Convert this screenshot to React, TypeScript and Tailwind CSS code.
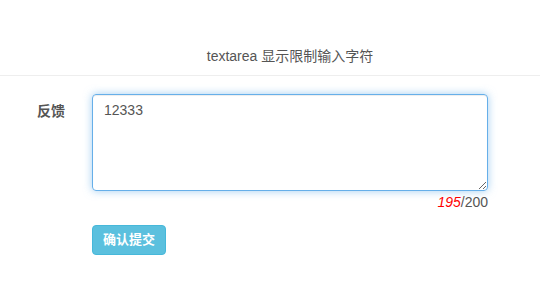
import { useState } from "react";

export default function App() {
  const [value, setValue] = useState("12333");
  const max = 200;

  return (
    <div
      className="h-[300px] w-[540px] bg-white text-[14px] text-[#333]"
      style={{ fontFamily: '"Liberation Sans", "Noto Sans CJK SC", sans-serif' }}
    >
      <div className="flex h-[76px] items-end justify-center border-b border-[#eee] pb-[9px] pl-[40px]">
        <h4 className="text-[14px] leading-[20px] text-[#555]">textarea 显示限制输入字符</h4>
      </div>
      <form className="pt-[18px]" onSubmit={(event) => event.preventDefault()}>
        <div className="flex">
          <label className="w-[92px] pl-[37px] pt-[7px] text-[14px] font-bold leading-[20px] text-[#555]">反馈</label>
          <div className="w-[396px]">
            <textarea
              className="block h-[97px] w-full resize-y rounded-[4px] border border-[#66afe9] px-[11px] py-[5px] text-[14px] leading-[20px] text-[#555] shadow-[inset_0_1px_1px_rgba(0,0,0,0.075),0_0_8px_rgba(102,175,233,0.6)] outline-none"
              value={value}
              maxLength={max}
              onChange={(event) => setValue(event.target.value)}
            />
            <div className="mt-[1px] text-right text-[14px] leading-[20px] text-[#555]">
              <span className="italic text-[#f00]">{max - value.length}</span>/{max}
            </div>
          </div>
        </div>
        <div className="mt-[13px] pl-[92px]">
          <button
            type="submit"
            className="h-[30px] rounded-[4px] border border-[#46b8da] bg-[#5bc0de] px-[10px] text-[13px] font-semibold leading-[20px] text-white"
          >
            确认提交
          </button>
        </div>
      </form>
    </div>
  );
}
